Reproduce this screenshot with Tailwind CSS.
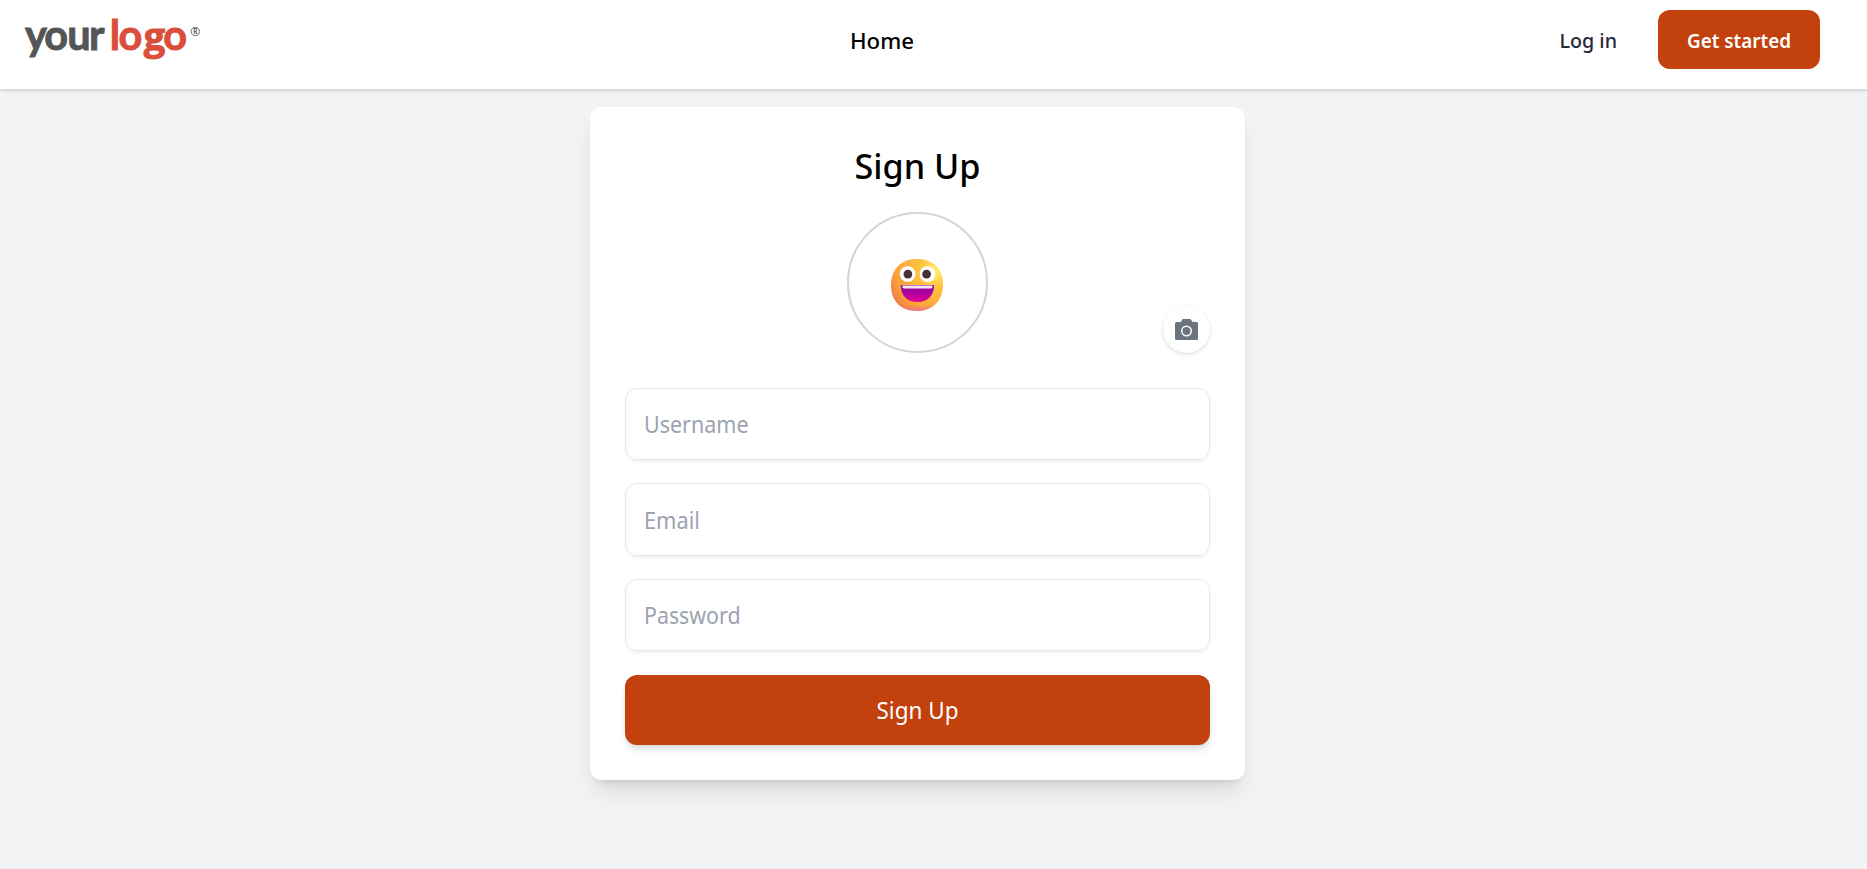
<!DOCTYPE html>
<html lang="en">
<head>
<meta charset="utf-8">
<title>Sign Up</title>
<script src="https://cdn.jsdelivr.net/npm/@tailwindcss/browser@4"></script>
</head>
<body class="h-screen overflow-hidden bg-[#f2f3f5] font-['Noto_Sans','Open_Sans',sans-serif] text-black">
<header class="relative grid h-[89px] grid-cols-[850px_auto_1fr] items-start bg-white shadow-[0_1.5px_4px_rgba(0,0,0,0.1),0_1px_2px_rgba(0,0,0,0.06)]">
  <a class="block" aria-label="your logo">
    <svg class="block" width="220" height="80" viewBox="0 0 220 80" font-family="Lato, sans-serif" font-weight="700" stroke-width="0.9">
      <text x="25 44.200 67.300 89" y="50.400" font-size="41.500" fill="#545557" stroke="#545557">your</text>
      <text x="109.800 118.500 143.800 163.200" y="50.400" font-size="41.500" fill="#da4f3b" stroke="#da4f3b">lo<tspan font-family="Open Sans" font-size="38">g</tspan>o</text>
      <circle cx="195.300" cy="31.500" r="4.200" fill="none" stroke="#65716d" stroke-width="1"/>
      <text x="193.200" y="34" font-size="6.500" fill="#45504d">R</text>
    </svg>
  </a>
  <nav class="pt-[25px] text-[22px] font-medium leading-8"><a class="block w-[64px] whitespace-nowrap"><svg class="block overflow-visible" width="64" height="32"><text x="0" y="24" textLength="64" lengthAdjust="spacingAndGlyphs">Home</text></svg></a></nav>
  <div class="flex justify-end gap-[41px] pr-[47px] pt-[10px] text-[19.400px]">
    <a class="block pt-[16px] font-medium text-[#1f2937]"><svg class="block overflow-visible" width="57" height="30" fill="currentColor"><text x="-0.500" y="22" textLength="57.500" lengthAdjust="spacingAndGlyphs">Log in</text></svg></a>
    <a class="flex h-[59px] w-[162px] justify-center rounded-[12px] bg-[#c2410c] pt-[16px] font-semibold text-white"><svg class="block overflow-visible" width="104" height="30" fill="currentColor"><text x="0" y="22" textLength="104" lengthAdjust="spacingAndGlyphs">Get started</text></svg></a>
  </div>
</header>
<main class="flex justify-center pr-[32px] pt-[18px]">
  <section class="h-[673px] w-[655px] rounded-[12px] bg-white px-[35px] pt-[35px] shadow-[0_15px_22px_-4px_rgba(0,0,0,0.1),0_6px_9px_-6px_rgba(0,0,0,0.16)]">
    <h1 class="flex h-[70px] justify-center text-[35px] font-medium"><svg class="block overflow-visible" width="124" height="50"><text x="-1.500" y="37" textLength="126" lengthAdjust="spacingAndGlyphs">Sign Up</text></svg></h1>
    <div class="relative flex h-[141px] justify-center">
      <div class="flex size-[141px] items-center justify-center rounded-full border-2 border-[#d1d5db]">
        <svg class="mr-px mt-[5px]" width="52" height="52" viewBox="0 0 32 32">
          <defs>
            <radialGradient id="face" cx="0" cy="0" r="1" gradientUnits="userSpaceOnUse" gradientTransform="translate(27 7.500) rotate(133) scale(36)">
              <stop offset="0" stop-color="#fff267"/><stop offset=".28" stop-color="#ffc242"/><stop offset=".64" stop-color="#fda638"/><stop offset=".83" stop-color="#ed8144"/><stop offset="1" stop-color="#d95f5d"/>
            </radialGradient>
            <linearGradient id="chin" x1="0" y1="28" x2="0" y2="32" gradientUnits="userSpaceOnUse"><stop stop-color="#f070a0" stop-opacity="0"/><stop offset="1" stop-color="#ed6fa6" stop-opacity=".75"/></linearGradient>
            <linearGradient id="mouth" x1="0" y1="16" x2="0" y2="26" gradientUnits="userSpaceOnUse"><stop stop-color="#8b0da0"/><stop offset=".45" stop-color="#a7009d"/><stop offset="1" stop-color="#e20094"/></linearGradient>
          </defs>
          <path d="M16 0C26.500 0 32 6.500 32 15.800S26 32 16 32 0 26 0 16.200 6 0 16 0Z" fill="url(#face)"/>
          <path d="M16 0C26.500 0 32 6.500 32 15.800S26 32 16 32 0 26 0 16.200 6 0 16 0Z" fill="url(#chin)"/>
          <circle cx="9.700" cy="9.900" r="5.100" fill="#e78725" opacity=".5"/>
          <circle cx="10.200" cy="9.300" r="4.900" fill="#fff"/><circle cx="22.500" cy="9.300" r="4.900" fill="#fff"/>
          <circle cx="10.400" cy="9.300" r="2.700" fill="#482d37"/><circle cx="21.900" cy="9.300" r="2.700" fill="#482d37"/>
          <path d="M6 16H26.500C26.500 22 23 26.500 16.200 26.500S6 22 6 16Z" fill="url(#mouth)"/>
          <path d="M7 16.300H25.500V17.300Q25.500 18.200 24.500 18.200H8Q7 18.200 7 17.300Z" fill="#f5e7f5"/>
        </svg>
      </div>
      <button class="absolute bottom-0 right-0 flex size-[47px] items-center justify-center rounded-full bg-white text-[#6b7280] shadow-[0_1.500px_4px_rgba(0,0,0,0.1),0_1px_3px_rgba(0,0,0,0.06)]" aria-label="Upload photo">
        <svg width="23" height="23" viewBox="0 0 23 23" fill="currentColor"><path fill-rule="evenodd" d="M1.500 4H5Q6 4 6.500 3L7.200 1.500Q7.500 1 8.200 1H15Q15.700 1 16 1.500L16.800 3Q17.300 4 18.200 4H21.500Q23 4 23 5.500V20.500Q23 22 21.500 22H1.500Q0 22 0 20.500V5.500Q0 4 1.500 4ZM11.500 7.500A5.500 5.500 0 1 0 11.500 18.500A5.500 5.500 0 1 0 11.500 7.500ZM11.500 9A4 4 0 1 1 11.500 17A4 4 0 1 1 11.500 9Z"/></svg>
      </button>
    </div>
    <form class="mt-[35px] flex flex-col gap-[23px] text-[23.300px]">
      <label class="flex h-[72px] rounded-[12px] border border-[#e5e7eb] pl-[17.500px] pt-[17px] text-[#9ca3af] shadow-[0_1.500px_3px_rgba(0,0,0,0.05)]"><svg class="block overflow-visible" width="104" height="36" fill="currentColor"><text x="0" y="27" textLength="104.500" lengthAdjust="spacingAndGlyphs">Username</text></svg></label>
      <label class="flex h-[73px] rounded-[12px] border border-[#e5e7eb] pl-[17.500px] pt-[18px] text-[#9ca3af] shadow-[0_1.500px_3px_rgba(0,0,0,0.05)]"><svg class="block overflow-visible" width="56" height="36" fill="currentColor"><text x="0" y="27" textLength="56" lengthAdjust="spacingAndGlyphs">Email</text></svg></label>
      <label class="flex h-[72px] rounded-[12px] border border-[#e5e7eb] pl-[17.500px] pt-[17px] text-[#9ca3af] shadow-[0_1.500px_3px_rgba(0,0,0,0.05)]"><svg class="block overflow-visible" width="96" height="36" fill="currentColor"><text x="0" y="27" textLength="96.500" lengthAdjust="spacingAndGlyphs">Password</text></svg></label>
      <button class="mt-px flex h-[70px] justify-center rounded-[12px] bg-[#c2410c] pt-[17px] text-white shadow-[0_6px_9px_-1px_rgba(0,0,0,0.1),0_3px_6px_-3px_rgba(0,0,0,0.12)]" type="button"><svg class="block overflow-visible" width="81" height="36" fill="currentColor"><text x="-0.500" y="27" textLength="82" lengthAdjust="spacingAndGlyphs">Sign Up</text></svg></button>
    </form>
  </section>
</main>
</body>
</html>
